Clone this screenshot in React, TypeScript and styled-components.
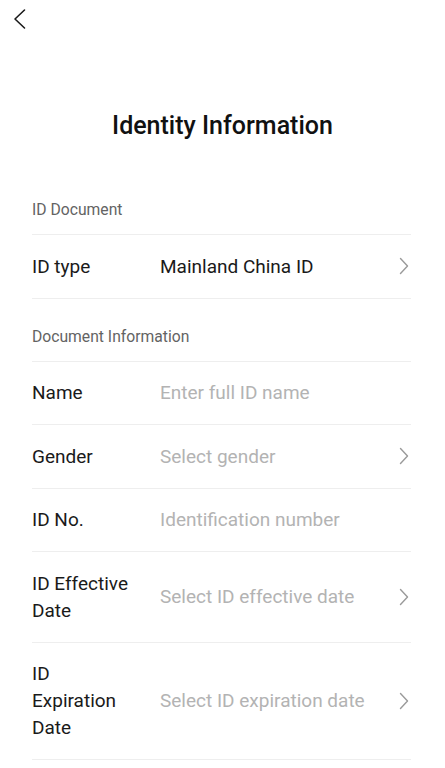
import styled, { createGlobalStyle } from "styled-components";
import { FC } from "react";

const GlobalStyle = createGlobalStyle`
    html, body {
        margin: 0;
        padding: 0;
        background: #ffffff;
    }
    body {
        font-family: Roboto, "Noto Sans", Arial, sans-serif;
        -webkit-font-smoothing: antialiased;
    }
`;

type Field = {
    label: string;
    value: string;
    filled?: boolean;
    arrow?: boolean;
};

const documentFields: Field[] = [
    { label: "Name", value: "Enter full ID name" },
    { label: "Gender", value: "Select gender", arrow: true },
    { label: "ID No.", value: "Identification number" },
    { label: "ID Effective Date", value: "Select ID effective date", arrow: true },
    { label: "ID Expiration Date", value: "Select ID expiration date", arrow: true },
];

const BackIcon: FC = () => (
    <svg width="14" height="22" viewBox="0 0 14 22" fill="none">
        <polyline
            points="11.5,2 2,11 11.5,20"
            stroke="#1a1a1a"
            strokeWidth="1.6"
            strokeLinecap="round"
            strokeLinejoin="round"
        />
    </svg>
);

const ArrowIcon: FC = () => (
    <svg width="10" height="18" viewBox="0 0 10 18" fill="none">
        <polyline
            points="1.5,1.5 8.5,9 1.5,16.5"
            stroke="#9a9a9a"
            strokeWidth="1.4"
            strokeLinecap="round"
            strokeLinejoin="round"
        />
    </svg>
);

const Row: FC<Field> = ({ label, value, filled, arrow }) => (
    <FieldRow>
        <Label>{label}</Label>
        <Value $filled={filled}>{value}</Value>
        <ArrowSlot>{arrow && <ArrowIcon />}</ArrowSlot>
    </FieldRow>
);

const App: FC = () => {
    return (
        <Page>
            <GlobalStyle />
            <TopBar>
                <BackButton>
                    <BackIcon />
                </BackButton>
            </TopBar>
            <Title>Identity Information</Title>
            <Content>
                <SectionTitle>ID Document</SectionTitle>
                <Row label="ID type" value="Mainland China ID" filled arrow />
                <SectionTitle>Document Information</SectionTitle>
                {documentFields.map((f) => (
                    <Row key={f.label} {...f} />
                ))}
            </Content>
        </Page>
    );
};

const Page = styled.div`
    width: 100%;
    min-height: 768px;
    background: #ffffff;
`;
const TopBar = styled.div`
    height: 40px;
    display: flex;
    align-items: center;
    padding-left: 13px;
`;
const BackButton = styled.div`
    width: 14px;
    height: 22px;
    display: flex;
    margin-top: -2px;
    cursor: pointer;
`;
const Title = styled.h1`
    margin: 0;
    padding: 70px 0 30px;
    text-align: center;
    font-size: 25px;
    line-height: 32px;
    font-weight: 500;
    color: #111111;
`;
const Content = styled.div`
    padding: 0 34px 0 32px;
`;
const SectionTitle = styled.div`
    padding: 28px 0 14px;
    font-size: 15.7px;
    line-height: 20px;
    color: #636363;
    border-bottom: 1px solid #eeeeee;
`;
const FieldRow = styled.div`
    display: flex;
    align-items: center;
    padding: 17.75px 0;
    border-bottom: 1px solid #eeeeee;
`;
const Label = styled.div`
    width: 100px;
    margin-right: 28px;
    flex-shrink: 0;
    font-size: 19px;
    line-height: 27px;
    color: #1a1a1a;
`;
const Value = styled.div<{ $filled?: boolean }>`
    flex: 1;
    font-size: 19px;
    line-height: 27px;
    color: ${(p) => (p.$filled ? "#1a1a1a" : "#b3b3b3")};
`;
const ArrowSlot = styled.div`
    width: 10px;
    height: 18px;
    display: flex;
    margin-right: 2px;
`;

export default App;
